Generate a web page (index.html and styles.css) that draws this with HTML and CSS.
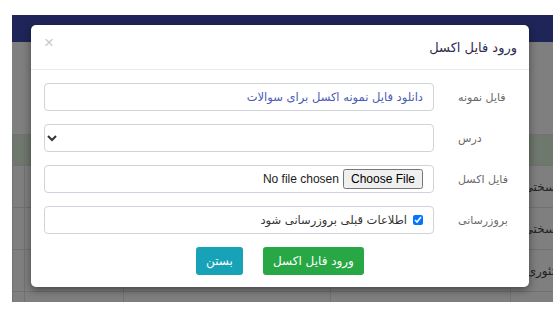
FILE: index.html
```html
<!DOCTYPE html>
<html lang="fa">
<head>
  <meta charset="UTF-8" />
  <title>ورود فایل اکسل</title>
  <link rel="stylesheet" href="styles.css">
</head>
<body>
  <div class="page">
    <div class="top-bar"></div>
    <div class="tools"></div>
    <table class="grid">
      <tr class="row-success"><td></td><td></td><td></td><td></td><td></td></tr>
      <tr><td></td><td></td><td></td><td></td><td class="cut">سختی</td></tr>
      <tr><td></td><td></td><td></td><td></td><td class="cut">سختی</td></tr>
      <tr><td></td><td></td><td></td><td></td><td class="cut">تئوری</td></tr>
      <tr><td></td><td></td><td></td><td></td><td></td></tr>
    </table>
    <div class="backdrop"></div>

    <div class="modal">
      <div class="modal-header">
        <h5 class="modal-title">ورود فایل اکسل</h5>
        <span class="close">&times;</span>
      </div>

      <div class="modal-body">
        <div class="form-row">
          <label>فایل نمونه</label>
          <div class="field">
            <a href="#" class="sample-link">دانلود فایل نمونه اکسل برای سوالات</a>
          </div>
        </div>
        <div class="form-row">
          <label>درس</label>
          <select class="field select"><option></option></select>
        </div>
        <div class="form-row">
          <label>فایل اکسل</label>
          <div class="field">
            <input type="file" class="file-input">
          </div>
        </div>
        <div class="form-row">
          <label>بروزرسانی</label>
          <div class="field check">
            <input type="checkbox" checked>
            <span>اطلاعات قبلی بروزرسانی شود</span>
          </div>
        </div>
      </div>

      <div class="modal-footer">
        <button class="btn btn-success">ورود فایل اکسل</button>
        <button class="btn btn-info">بستن</button>
      </div>
    </div>
  </div>
</body>
</html>
```

FILE: styles.css
```css
* {
  box-sizing: border-box;
}

body {
  margin: 0;
  background: #fff;
  overflow: hidden;
  font-family: "DejaVu Sans", sans-serif;
}

.page {
  position: relative;
  margin: 15px 0 0 12px;
  height: 287px;
  background: #fff;
  overflow: hidden;
}

.top-bar {
  height: 27px;
  background: #3f4bb3;
}

.tools {
  height: 92px;
}

.grid {
  border-collapse: collapse;
  table-layout: fixed;
  width: 580px;
}

.grid td {
  border: 1px solid #dee2e6;
  height: 42px;
  padding: 0;
  font-size: 12px;
  color: #444;
}

.grid td:nth-child(1) { width: 12px; }
.grid td:nth-child(2) { width: 99px; }
.grid td:nth-child(3) { width: 207px; }
.grid td:nth-child(4) { width: 180px; }

.grid tr.row-success td {
  background: #dff0d8;
  height: 31px;
}

.grid td.cut {
  direction: rtl;
  text-align: right;
  padding-right: 36px;
  white-space: nowrap;
  overflow: hidden;
}

.backdrop {
  position: absolute;
  inset: 0;
  background: rgba(0, 0, 0, 0.5);
}

.modal {
  position: absolute;
  left: 19px;
  top: 10px;
  width: 498px;
  background: #fff;
  border-radius: 5px;
  box-shadow: 0 3px 8px rgba(0, 0, 0, 0.45);
  direction: rtl;
}

.modal-header {
  height: 45px;
  padding: 0 12px;
  display: flex;
  align-items: center;
  justify-content: space-between;
  border-bottom: 1px solid #e9ecef;
}

.modal-title {
  margin: 0;
  font-size: 13px;
  font-weight: normal;
  color: #2e2c4f;
}

.close {
  font-family: "Liberation Sans", sans-serif;
  font-size: 17px;
  color: #c9c9c9;
  margin-top: -9px;
  margin-left: 1px;
}

.modal-body {
  padding: 13px 13px 0;
}

.form-row {
  display: flex;
  align-items: center;
  gap: 24px;
  margin-bottom: 13px;
}

.form-row label {
  width: 58px;
  text-align: left;
  font-size: 11px;
  color: #6a6a6a;
}

.field {
  flex: 1;
  height: 28px;
  border: 1px solid #ced4da;
  border-radius: 4px;
  padding: 0 10px;
  display: flex;
  align-items: center;
  background: #fff;
  font-size: 11.5px;
}

.sample-link {
  color: #4a5ab5;
  text-decoration: none;
}

.select {
  direction: rtl;
  padding: 0 9px;
  color: #333;
}

.file-input {
  direction: rtl;
  font-family: "Liberation Sans", Arial, sans-serif;
  font-size: 12px;
  color: #222;
}

.check {
  gap: 6px;
  color: #333;
}

.check input {
  width: 10px;
  height: 10px;
  margin: 0;
}

.modal-footer {
  display: flex;
  justify-content: center;
  gap: 20px;
  padding: 0 0 12px;
}

.btn {
  height: 28px;
  padding: 0 10px;
  border: none;
  border-radius: 3px;
  color: #fff;
  font-family: "DejaVu Sans", sans-serif;
  font-size: 12px;
  font-weight: normal;
}

.btn-success {
  background: #28a745;
}

.btn-info {
  background: #17a2b8;
}
```
